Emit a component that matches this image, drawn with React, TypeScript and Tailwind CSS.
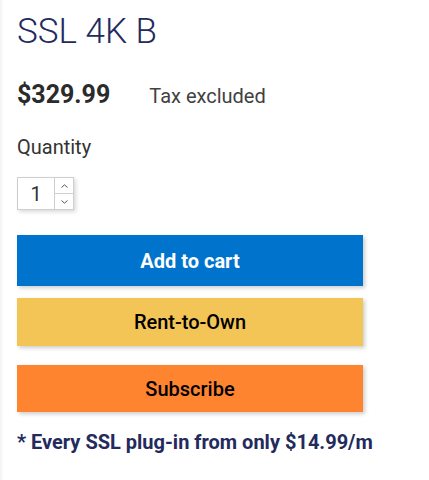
import React from "react";

export default function App() {
  return (
    <div className="w-[429px] h-[480px] bg-white flex" style={{ fontFamily: "Roboto, 'Liberation Sans', sans-serif" }}>
      <div className="w-[4px] bg-gradient-to-r from-[#f3f3f3] to-white" />
      <div className="flex flex-col pl-[13px] pt-[12px]">
        <h1 className="text-[35px] font-light leading-[40px] text-[#232a5c]">SSL 4K B</h1>
        <div className="flex items-baseline mt-[28px] h-[30px]">
          <span className="text-[25px] font-bold text-[#2b2b2b] leading-[30px]">$329.99</span>
          <span className="text-[20px] text-[#414141] ml-[39px] leading-[30px]">Tax excluded</span>
        </div>
        <div className="text-[20px] text-[#333] mt-[25px] leading-[24px]">Quantity</div>
        <div className="flex mt-[18px] w-[57px] h-[33px] border border-[#cfcfcf] shadow-[2px_2px_4px_rgba(0,0,0,0.15)]">
          <div className="w-[37px] flex items-center justify-center text-[20px] text-[#333] border-r border-[#cfcfcf]">1</div>
          <div className="flex flex-col flex-1">
            <div className="flex-1 flex items-center justify-center border-b border-[#cfcfcf]">
              <svg width="7" height="4" viewBox="0 0 7 4"><path d="M0.5 3.5 L3.5 0.8 L6.5 3.5" fill="none" stroke="#555" strokeWidth="1" /></svg>
            </div>
            <div className="flex-1 flex items-center justify-center">
              <svg width="7" height="4" viewBox="0 0 7 4"><path d="M0.5 0.5 L3.5 3.2 L6.5 0.5" fill="none" stroke="#555" strokeWidth="1" /></svg>
            </div>
          </div>
        </div>
        <button className="mt-[25px] w-[346px] h-[51px] bg-[#0074cd] text-white text-[20px] font-bold shadow-[2px_2px_4px_rgba(0,0,0,0.2)]">Add to cart</button>
        <button className="mt-[12px] w-[346px] h-[48px] bg-[#f3c556] text-black text-[20px] font-medium shadow-[2px_2px_4px_rgba(0,0,0,0.2)]">Rent-to-Own</button>
        <button className="mt-[19px] w-[346px] h-[47px] bg-[#ff8430] text-black text-[20px] font-medium shadow-[2px_2px_4px_rgba(0,0,0,0.2)]">Subscribe</button>
        <div className="mt-[18px] text-[20px] font-bold leading-[24px] text-[#232a5c]">* Every SSL plug-in from only $14.99/m</div>
      </div>
    </div>
  );
}
